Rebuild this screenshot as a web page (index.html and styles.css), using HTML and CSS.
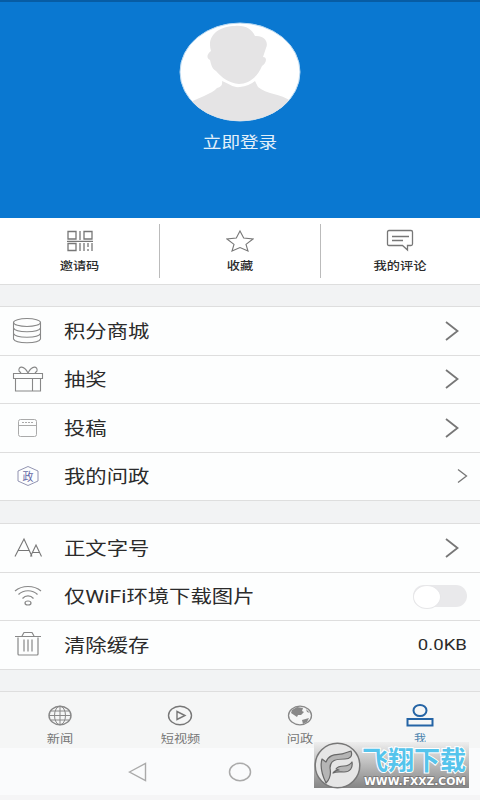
FILE: index.html
```html
<!DOCTYPE html>
<html lang="zh-CN">
<head>
<meta charset="utf-8">
<title>我</title>
<link rel="stylesheet" href="styles.css">
</head>
<body>
<main class="app">
  <header class="profile">
    <svg class="avatar" width="122" height="101" viewBox="0 0 122 101">
      <defs><clipPath id="face"><ellipse cx="61" cy="50" rx="60" ry="49"/></clipPath></defs>
      <ellipse cx="61" cy="50" rx="60" ry="49" fill="#fff" stroke="#b8d8f1"/>
      <g clip-path="url(#face)" fill="#e5e4e5">
        <path d="M10 81C18 76 33 72 38 66Q44 65 43 59C50 62 55 66 61 65Q70 64 76 59L79 65C87 72 102 72 112 79V101H10Z"/>
        <path d="M31 38C27 36 28 32 32 29C27 13 41 4 56 4C66 3 73 7 76 14C85 13 90 20 87 26L84 35C89 35 87 42 83 44C78 56 69 62 60 62C50 61 43 56 37 49C33 47 32 42 31 38Z"/>
      </g>
    </svg>
    <a class="login"><span class="wide">立即登录</span></a>
  </header>

  <nav class="shortcuts">
    <a class="shortcut">
      <svg width="28" height="24" viewBox="0 0 28 24" fill="none" stroke="#777" stroke-width="1.3">
        <path d="M2 2.500h8v7.500H2zM18 2.500h8v7.500h-8zM2 14.500h8v7H2zM14 2v9M1 12.300h26M14 14v8M18 14v8M22 14v4M22 20v2M26 14v8"/>
      </svg>
      <span class="wide">邀请码</span>
    </a>
    <a class="shortcut">
      <svg width="28" height="24" viewBox="0 0 28 24" fill="none" stroke="#777" stroke-width="1.1">
        <path d="M14 2l3.700 7 9.300 1-7 5.400 2 6.600-8-3.500-8 3.500 2-6.600L1 10l9.300-1z"/>
      </svg>
      <span class="wide">收藏</span>
    </a>
    <a class="shortcut">
      <svg width="28" height="24" viewBox="0 0 28 24" fill="none" stroke="#777" stroke-width="1.3">
        <path d="M3 1.500h22q1.500 0 1.500 1.500v12q0 1.500-1.500 1.500h-3.500V21l-5-4.500H3q-1.500 0-1.500-1.500V3q0-1.500 1.500-1.500zM6 7.500h17M6 11.500h11"/>
      </svg>
      <span class="wide">我的评论</span>
    </a>
  </nav>

  <section class="group">
    <div class="row">
      <svg class="icon" width="32" height="28" viewBox="0 0 32 28" fill="none" stroke="#888" stroke-width="1.100">
        <ellipse cx="15" cy="5.500" rx="13.500" ry="4"/>
        <path d="M1.500 5.500v16.500c2 5 25 5 27 0V5.500M1.500 11c2 5 25 5 27 0M1.500 16.500c2 5 25 5 27 0"/>
      </svg>
      <span class="label wide">积分商城</span>
      <svg class="arrow" width="14" height="22" viewBox="0 0 14 22"><path d="M1 2l11.500 9L1 20"/></svg>
    </div>
    <div class="row">
      <svg class="icon" width="32" height="28" viewBox="0 0 32 28" fill="none" stroke="#888" stroke-width="1.100">
        <path d="M1.500 8.500h29v5h-29zM3.500 13.500V26h25V13.500M20.500 14v12M16 8C12 0 6 1 7 6l2 2M16 8c4-8 10-7 9-2l-2 2"/>
      </svg>
      <span class="label wide">抽奖</span>
      <svg class="arrow" width="14" height="22" viewBox="0 0 14 22"><path d="M1 2l11.500 9L1 20"/></svg>
    </div>
    <div class="row">
      <svg class="icon" width="32" height="28" viewBox="0 0 32 28" fill="none" stroke="#aaa">
        <rect x="6.500" y="5.500" width="18" height="17" rx="2"/><path d="M7 11.500h17"/><path d="M10 8.500h11" stroke-dasharray="2 1"/>
      </svg>
      <span class="label wide">投稿</span>
      <svg class="arrow" width="14" height="22" viewBox="0 0 14 22"><path d="M1 2l11.500 9L1 20"/></svg>
    </div>
    <div class="row">
      <span class="icon hexagon">
        <svg width="32" height="28" viewBox="0 0 32 28" fill="none" stroke="#8789a9" stroke-width=".9"><path d="M16 4.500L26 9v10L16 23.500 6 19V9z"/></svg>
        <span class="hexagon-text">政</span>
      </span>
      <span class="label wide">我的问政</span>
      <svg class="arrow arrow-small" width="11" height="16" viewBox="0 0 11 16"><path d="M1 1.500L9.500 8 1 14.500"/></svg>
    </div>
  </section>

  <section class="group">
    <div class="row">
      <svg class="icon" width="32" height="28" viewBox="0 0 32 28" fill="none" stroke="#777" stroke-width="1.100">
        <path d="M3 22.500L12 5l8 17.500M6 16.500h11.500M18.500 22.500L24 11l5.500 11.500M20.500 18.500h7"/>
      </svg>
      <span class="label wide">正文字号</span>
      <svg class="arrow" width="14" height="22" viewBox="0 0 14 22"><path d="M1 2l11.500 9L1 20"/></svg>
    </div>
    <div class="row">
      <svg class="icon" width="32" height="28" viewBox="0 0 32 28" fill="none" stroke="#888" stroke-width="1.200">
        <path d="M3 9c7-6 19-6 26 0M6.500 12.500c5-5 14-5 19 0M10.500 16.500c3-3.500 8-3.500 11 0"/><ellipse cx="16" cy="21" rx="3" ry="2"/>
      </svg>
      <span class="label wide">仅WiFi环境下载图片</span>
      <span class="switch"></span>
    </div>
    <div class="row">
      <svg class="icon" width="32" height="28" viewBox="0 0 32 28" fill="none" stroke="#888" stroke-width="1.200">
        <path d="M3 5.500h26M10 5l2-3.500h8L22 5M6 6.500v16.500q0 1 1 1h18q1 0 1-1V6.500M12 8.500v12M16 8.500v12M20 8.500v12"/>
      </svg>
      <span class="label wide">清除缓存</span>
      <span class="size wide">0.0KB</span>
    </div>
  </section>

  <nav class="tabs">
    <a class="tab">
      <svg width="30" height="24" viewBox="0 0 30 24" fill="none" stroke="#888">
        <ellipse cx="15" cy="11.500" rx="11" ry="9.300" stroke-width="1.400"/><ellipse cx="15" cy="11.500" rx="5.500" ry="9.300"/><path d="M15 2.500v18M4 11.500h22M6 7h18M6 16h18"/>
      </svg>
      <span class="wide">新闻</span>
    </a>
    <a class="tab">
      <svg width="30" height="24" viewBox="0 0 30 24" fill="none" stroke="#777" stroke-width="1.400">
        <ellipse cx="15" cy="11.500" rx="11.500" ry="9.300"/><path d="M12 7.500l8 4-8 4z"/>
      </svg>
      <span class="wide">短视频</span>
    </a>
    <a class="tab">
      <svg width="30" height="24" viewBox="0 0 30 24" fill="none" stroke="#888" stroke-width="1.300">
        <ellipse cx="15" cy="11.500" rx="11.500" ry="9.300"/>
        <path d="M7 6l5-3 6 1-1 3 2 1-3 3h-3l-1 2-3-2-3-2zM17 16l7-2-2 4-4 2zM21 5l4 4-3-1z" fill="#888" stroke="none"/>
      </svg>
      <span class="wide">问政</span>
    </a>
    <a class="tab tab-active">
      <svg width="30" height="24" viewBox="0 0 30 24" fill="none" stroke="#2464a5" stroke-width="2">
        <ellipse cx="15" cy="6.500" rx="6.500" ry="5.500"/><path d="M2.500 15h25v6.500h-25z"/>
      </svg>
      <span class="wide">我</span>
    </a>
  </nav>

  <footer class="system">
    <svg width="20" height="20" viewBox="0 0 20 20" fill="none" stroke="#aaa" stroke-width="1.400"><path d="M1.500 10L17.500 1.500v17z"/></svg>
    <svg width="24" height="20" viewBox="0 0 24 20" fill="none" stroke="#aaa" stroke-width="1.500"><ellipse cx="12" cy="10" rx="10.500" ry="8.700"/></svg>
  </footer>

  <aside class="watermark">
    <svg width="48" height="47" viewBox="0 0 48 47">
      <circle cx="23.500" cy="23.500" r="22.300" fill="#e6e6e6" stroke="#777" stroke-width="1.500"/>
      <g fill="#b5b5b5" stroke="#686868" stroke-width="1.200" stroke-linejoin="round">
        <path d="M12 41C7 31 6 24 8 17l4 3c4-10 13-6 19-9l6-2c2 5-1 8-6 8-9 0-15 1-15 9 1 5 1 10-4 15z"/>
        <path d="M19 31c2-3 4-3 6-3l-3-1c2-3 5-3 8-3 4 0 6-1 8-4 1 6-2 10-8 10-4 0-7-1-11 1z"/>
      </g>
    </svg>
    <div class="brand">
      <span class="brand-name">飞翔下载</span>
      <svg class="brand-url" width="107" height="13" viewBox="0 0 107 13"><text x="2" y="10.500" textLength="102" lengthAdjust="spacingAndGlyphs">WWW.FXXZ.COM</text></svg>
    </div>
  </aside>
</main>
</body>
</html>
```
FILE: styles.css
```css
* { box-sizing: border-box; }

body {
  margin: 0;
  font-family: Roboto, "Noto Sans CJK SC", sans-serif;
  color: #2b2b2b;
}

.app {
  position: relative;
  display: flex;
  flex-direction: column;
  width: 480px;
  height: 800px;
  overflow: hidden;
  background: #f2f3f4;
}

/* Glyphs are a fifth wider than they are tall throughout the interface. */
.wide {
  display: inline-block;
  white-space: nowrap;
  transform: scaleX(1.2);
}

.profile {
  display: flex;
  flex-direction: column;
  align-items: center;
  height: 218px;
  padding-top: 20px;
  border-top: 2px solid #075ca4;
  background: #0a78d1;
}

.avatar { display: block; }

.login {
  margin-top: 9px;
  font-size: 15.500px;
  line-height: 22px;
  color: #e2f0fa;
}

.shortcuts {
  display: flex;
  height: 67px;
  padding: 6px 0;
  background: #fff;
  border-bottom: 1px solid #dedede;
}

.shortcut {
  display: flex;
  flex: 1;
  flex-direction: column;
  align-items: center;
  padding-top: 5px;
  font-size: 11px;
  font-weight: 500;
  line-height: 16px;
}

.shortcut + .shortcut { border-left: 1px solid #bbb; }
.shortcut .wide { margin-top: 6px; }

.group {
  margin-top: 21px;
  border-top: 1px solid #dedede;
  background: #fdfefe;
}

.group + .group { margin-top: 22px; }

.row {
  display: flex;
  align-items: center;
  height: 48.500px;
  padding: 0 21px 0 12px;
  border-bottom: 1px solid #dedede;
}

.icon { flex: none; }

.label {
  margin: 2px auto 0 20px;
  font-size: 17.800px;
  line-height: 26px;
  transform-origin: left;
}

.arrow {
  flex: none;
  fill: none;
  stroke: #777;
  stroke-width: 1.800;
}

.arrow-small {
  margin-right: -9px;
  stroke-width: 1.300;
}

.hexagon {
  display: grid;
  place-items: center;
}

.hexagon > * { grid-area: 1 / 1; }

.hexagon-text {
  font-family: "Noto Sans CJK SC", sans-serif;
  font-size: 11px;
  line-height: 12px;
  color: #6568a5;
}

.switch {
  width: 54px;
  height: 22px;
  margin-right: -8px;
  border-radius: 11px;
  background: #e9e9eb;
}

.switch::before {
  content: "";
  display: block;
  width: 26px;
  height: 22px;
  border: 1px solid #e6e6e8;
  border-radius: 50%;
  background: #fff;
}

.size {
  margin-right: -8px;
  font-size: 15.500px;
  transform-origin: right;
}

.tabs {
  display: flex;
  height: 57px;
  margin-top: auto;
  border-top: 1px solid #dedede;
  background: #f5f6f6;
}

.tab {
  display: flex;
  flex: 1;
  flex-direction: column;
  align-items: center;
  padding-top: 12px;
  font-size: 11px;
  line-height: 16px;
  color: #777;
}

.tab .wide { margin-top: 4px; }

.tab-active {
  font-size: 10px;
  line-height: 14px;
  color: #4b83ad;
}

.system {
  display: flex;
  align-items: center;
  gap: 80px;
  height: 52px;
  padding-left: 128px;
  border-bottom: 5px solid #f5f5f6;
  background: #fafbfc;
}

.watermark {
  position: absolute;
  left: 314px;
  top: 742px;
  display: flex;
  width: 155px;
  height: 46px;
  background: linear-gradient(#eeeeee, #858585);
}

.brand {
  display: flex;
  flex-direction: column;
  padding-top: 2px;
}

.brand-name {
  height: 30px;
  font: 700 26px/30px "Noto Sans CJK SC", sans-serif;
  color: #55c4ec;
  -webkit-text-stroke: 2px #fff;
  paint-order: stroke fill;
  white-space: nowrap;
}

.brand-url text {
  font: bold 11px "DejaVu Sans", sans-serif;
  fill: #fff;
  stroke: #777;
  stroke-width: 1.500px;
  paint-order: stroke;
}
```
